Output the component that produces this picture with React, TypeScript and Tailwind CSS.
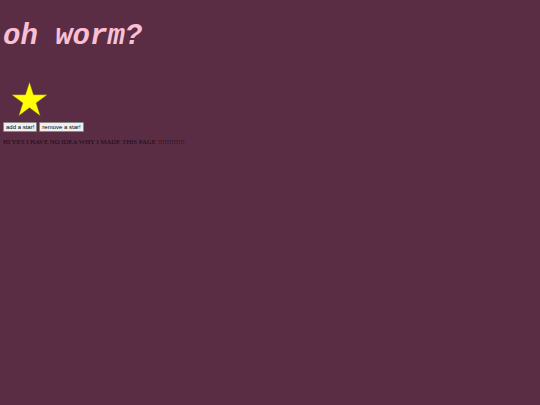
import React, { useState } from 'react';

export default function App() {
  const [stars, setStars] = useState(1);

  return (
    <div className="min-h-[405px] bg-[#5a2d45] px-[3px] pt-[22px]">
      <h1 className="font-['Liberation_Mono',monospace] text-[29px] font-bold italic leading-none text-[#f9c0d4]">
        oh worm?
      </h1>
      <div className="mt-[28px] flex h-[40px] items-center gap-1 pl-[8px]">
        {Array.from({ length: stars }).map((_, i) => (
          <svg key={i} width="37" height="36" viewBox="0 0 100 95">
            <polygon
              points="50,2 61,36 98,36 68,58 79,93 50,71 21,93 32,58 2,36 39,36"
              fill="#ffff00"
              stroke="#6b5a1a"
              strokeWidth="1"
            />
          </svg>
        ))}
      </div>
      <div className="mt-[3px] flex gap-[2px]">
        <button
          onClick={() => setStars(s => s + 1)}
          className="h-[10px] rounded-[1px] border border-[#888] bg-[#efefef] px-[2px] font-['Liberation_Sans',sans-serif] text-[6px] leading-none text-black"
        >
          add a star!
        </button>
        <button
          onClick={() => setStars(s => Math.max(0, s - 1))}
          className="h-[10px] rounded-[1px] border border-[#888] bg-[#efefef] px-[2px] font-['Liberation_Sans',sans-serif] text-[6px] leading-none text-black"
        >
          remove a star!
        </button>
      </div>
      <p className="mt-[7px] font-['Liberation_Serif',serif] text-[6.8px] leading-none text-[#1f0a14]">
        HI YES I HAVE NO IDEA WHY I MADE THIS PAGE !!!!!!!!!!!!
      </p>
    </div>
  );
}
